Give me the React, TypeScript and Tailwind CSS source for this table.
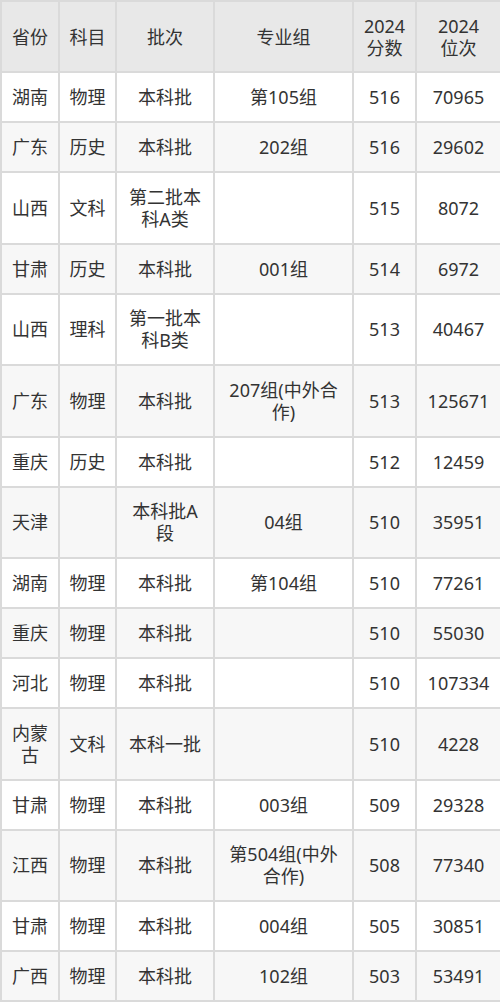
import React from "react";

type Row = [string, string, string, string, string, string];

const rows: Row[] = [
  ["湖南", "物理", "本科批", "第105组", "516", "70965"],
  ["广东", "历史", "本科批", "202组", "516", "29602"],
  ["山西", "文科", "第二批本\n科A类", "", "515", "8072"],
  ["甘肃", "历史", "本科批", "001组", "514", "6972"],
  ["山西", "理科", "第一批本\n科B类", "", "513", "40467"],
  ["广东", "物理", "本科批", "207组(中外合\n作)", "513", "125671"],
  ["重庆", "历史", "本科批", "", "512", "12459"],
  ["天津", "", "本科批A\n段", "04组", "510", "35951"],
  ["湖南", "物理", "本科批", "第104组", "510", "77261"],
  ["重庆", "物理", "本科批", "", "510", "55030"],
  ["河北", "物理", "本科批", "", "510", "107334"],
  ["内蒙\n古", "文科", "本科一批", "", "510", "4228"],
  ["甘肃", "物理", "本科批", "003组", "509", "29328"],
  ["江西", "物理", "本科批", "第504组(中外\n合作)", "508", "77340"],
  ["甘肃", "物理", "本科批", "004组", "505", "30851"],
  ["广西", "物理", "本科批", "102组", "503", "53491"],
];

const headers = ["省份", "科目", "批次", "专业组", "2024\n分数", "2024\n位次"];
const widths = ["w-[58px]", "w-[57px]", "w-[98px]", "w-[139px]", "w-[63px]", "w-[85px]"];

export default function App() {
  return (
    <div
      className="w-[500px] bg-white text-[#333333]"
      style={{ fontFamily: '"Noto Sans", "Noto Sans CJK SC", sans-serif' }}
    >
      <table className="w-[500px] table-fixed border-collapse border-2 border-[#dadada] text-[18px] leading-[22px]">
        <colgroup>
          {widths.map((w, i) => (
            <col key={i} className={w} />
          ))}
        </colgroup>
        <thead>
          <tr className="h-[71px] bg-[#e8e8e8]">
            {headers.map((h, i) => (
              <th
                key={i}
                className="border-2 border-[#dadada] px-2 text-center align-middle font-normal whitespace-pre-line"
              >
                {h}
              </th>
            ))}
          </tr>
        </thead>
        <tbody>
          {rows.map((r, ri) => {
            const tall = r.some((c) => c.includes("\n"));
            return (
              <tr
                key={ri}
                className={`${tall ? "h-[71.5px]" : "h-[50px]"} ${ri % 2 === 1 ? "bg-[#f7f7f7]" : "bg-white"}`}
              >
                {r.map((c, ci) => (
                  <td
                    key={ci}
                    className="border-2 border-[#dadada] px-1 text-center align-middle whitespace-pre-line"
                  >
                    {c}
                  </td>
                ))}
              </tr>
            );
          })}
        </tbody>
      </table>
    </div>
  );
}
